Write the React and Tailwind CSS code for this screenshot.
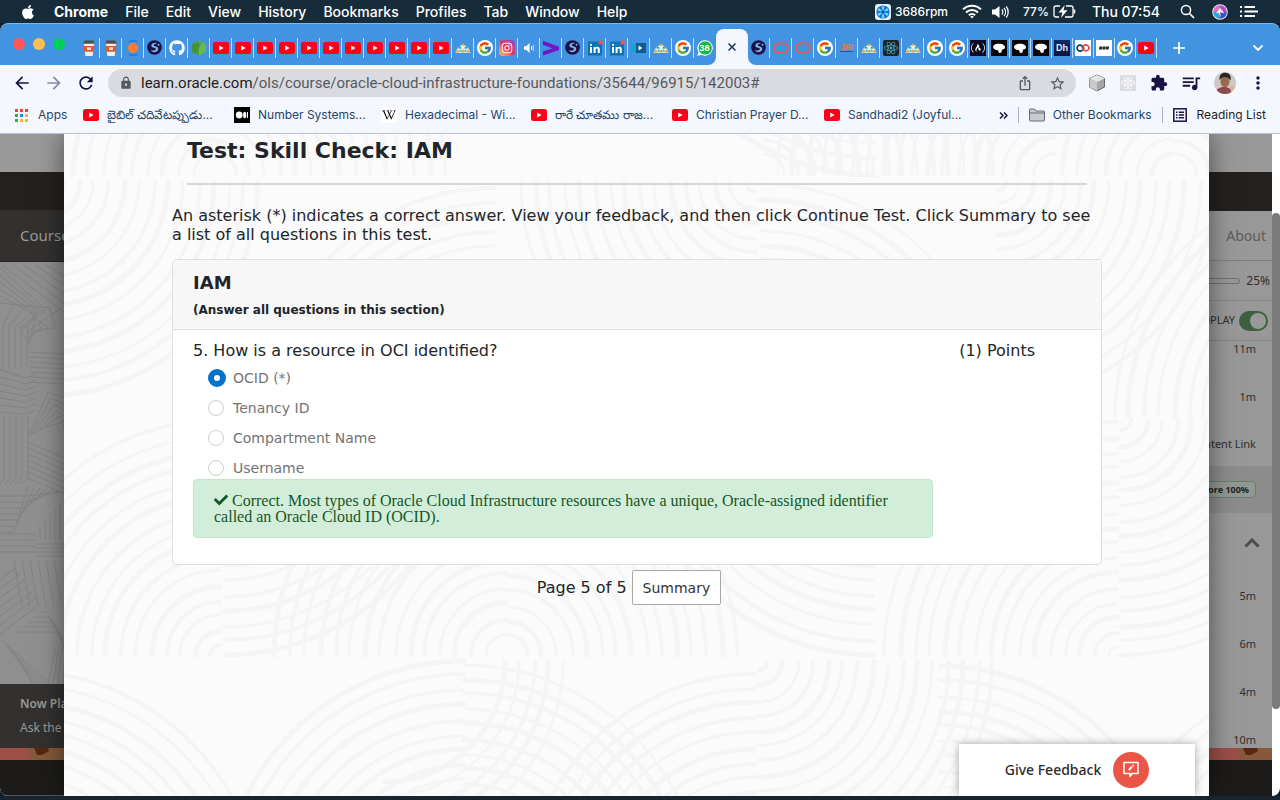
import React from 'react';
import { FaApple, FaGithub, FaInstagram, FaReact, FaWikipediaW, FaCheck, FaFreeCodeCamp } from 'react-icons/fa';
import { FcGoogle } from 'react-icons/fc';
import { MdExtension, MdIosShare, MdLock, MdMoreVert, MdQueueMusic, MdRefresh, MdStarBorder, MdArrowBack, MdArrowForward } from 'react-icons/md';

/* ---------- small drawings ---------- */
const YouTube = () => (
  <svg viewBox="0 0 16 12" className="h-3 w-4 shrink-0" aria-hidden="true">
    <rect width="16" height="12" rx="2.5" fill="#ff0019" />
    <path d="M6.2 3.6v4.8L10.6 6z" fill="#fff" />
  </svg>
);
const Cup = () => (
  <svg viewBox="1 1 14 14" className="size-4" aria-hidden="true">
    <path d="M3.6 4h8.8l-1.200 11H4.800z" fill="#f3eee8" />
    <path d="M3.200 6.200h9.600l-.7 5H3.900z" fill="#e2582b" />
    <path d="M6.300 7.400h3.400v2.400H6.300z" fill="#f6d9c8" />
    <path d="M4 1.200h8l1 2.800H3z" fill="#4a4f57" stroke="#777" strokeWidth=".6" />
  </svg>
);
const OrangeDot = () => (
  <svg viewBox="0 0 16 16" className="size-4" aria-hidden="true">
    <circle cx="8" cy="8" r="5" fill="#ff7a2b" />
    <path d="M3.800 2.200A7.200 7.200 0 0 1 12.200 2.200M3.800 13.800A7.200 7.200 0 0 0 12.200 13.800" fill="none" stroke="#1479f0" strokeWidth="1.400" />
  </svg>
);
const Globe = () => (
  <svg viewBox="0 0 16 16" className="size-[15px]" aria-hidden="true">
    <circle cx="8" cy="8" r="7.800" fill="#1b1247" />
    <path d="M10.800 3.200C7.500 2.600 4.500 4 4.600 6.200c.1 1.800 2.500 1.900 4 2.400 1.300.4 1.200 1.700-.2 2.300-1.300.5-3 .4-4.600-.6 1.200 2.300 3.400 3 5.400 2.500 2.600-.7 3.600-3.400 2-5C9.900 6.500 7.300 6.900 7.200 5.600 7.100 4.500 9 4.200 10.800 3.200z" fill="#7cb9ee" />
    <circle cx="12.300" cy="5" r="1" fill="#7cb9ee" />
  </svg>
);
const NodeHex = () => (
  <svg viewBox="0 0 16 16" className="size-4" aria-hidden="true">
    <path d="M8 .2l7 3.900v7.800L8 15.800 1 11.900V4.100z" fill="#4f9e45" />
    <path d="M8 .2l7 3.900v7.800L8 15.800z" fill="#6cb755" />
    <path d="M1 4.100L11 2 5 14.200l-4-2.300z" fill="#3f8a3c" opacity=".6" />
  </svg>
);
const Poly = () => (
  <svg viewBox="0 0 16 16" className="size-4" aria-hidden="true">
    <path d="M8 4l3 2 3 3 1.500 4H.5L2 9l3-3z" fill="#dff3f2" />
    <path d="M8 3.500l-2.400 2.300h4.800z" fill="#f5a33b" />
    <path d="M5 6L3 8.600h4zM11 6L9 8.600h4z" fill="#24a59a" />
    <path d="M2.600 9.200L.6 12.600h4zM8 8.800L6 12.600h4zM13.400 9.200l-2 3.400h4z" fill="#ef9f3c" />
    <path d="M5.400 9.200L4 11.600h2.800zM10.600 9.200L9.200 11.600H12z" fill="#2aa79d" />
  </svg>
);
const Google = () => (
  <span className="flex size-4 items-center justify-center rounded-full bg-white"><FcGoogle size={14} /></span>
);
const Insta = () => (
  <span className="flex size-4 items-center justify-center rounded bg-linear-to-bl from-[#8a3ac8] via-[#e8305f] to-[#fdc04a] text-white"><FaInstagram size={12} /></span>
);
const Speaker = () => (
  <svg viewBox="0 0 16 16" className="size-4" aria-hidden="true">
    <path d="M3 6.300h2.200L8.500 3v10L5.200 9.700H3z" fill="#fff" />
    <path d="M10.500 6v4M12.300 5v6" stroke="#dcebfa" strokeWidth="1" />
  </svg>
);
const PurpleArrow = () => (
  <svg viewBox="0 0 16 16" className="size-4" aria-hidden="true">
    <path d="M0 .8L16 6.800v3.200L0 15.600v-4L9.500 8.300 0 5z" fill="#7316c9" />
  </svg>
);
const LinkedIn = () => (
  <svg viewBox="0 0 16 16" className="size-4" aria-hidden="true">
    <rect x="1" y="1.500" width="14" height="14" fill="#0f74b3" />
    <path d="M3 7h2v6H3zM6.600 7h1.900v.9c.5-.8 1.200-1.100 2-1.100 1.600 0 2.300 1 2.300 2.700V13h-2V9.900c0-.8-.3-1.300-1-1.300s-1.200.5-1.200 1.300V13h-2z" fill="#fff" />
    <circle cx="4" cy="4.900" r="1.100" fill="#fff" />
    <circle cx="13.600" cy="2.400" r="2.200" fill="#ff4c4c" />
  </svg>
);
const Video = () => (
  <svg viewBox="0 0 16 16" className="size-4" aria-hidden="true">
    <rect x="0" y="3.500" width="12" height="9" fill="#12a5cf" />
    <rect x="5" y="3" width="10" height="10" fill="#0d5c8e" />
    <path d="M7.500 5.500v5l4-2.500z" fill="#fff" />
  </svg>
);
const Chat = () => (
  <span className="relative flex size-4 items-center justify-center text-white">
    <svg viewBox="0 0 16 16" className="absolute size-4" aria-hidden="true">
      <path d="M8.200.2a7.700 7.700 0 1 1-3.700 14.500L.3 15.900l1.200-4A7.700 7.700 0 0 1 8.200.2z" fill="#fff" />
      <circle cx="8.200" cy="7.900" r="6.700" fill="#12b84c" />
    </svg>
    <span className="relative text-[8px] leading-none font-bold">38</span>
  </span>
);
const OracleO = () => (
  <svg viewBox="0 0 16 16" className="size-4" aria-hidden="true">
    <rect x="1" y="3.400" width="14" height="9.200" rx="4.600" fill="none" stroke="#e8574a" strokeWidth="1.800" />
  </svg>
);
const ThreeR = () => (
  <span className="border-b border-[#27509c] text-[8px] leading-none font-bold text-[#e67a3c] italic">3RI</span>
);
const ReactTile = () => (
  <span className="flex size-4 items-center justify-center rounded-xs bg-[#20232a] text-[#4cb6c9]"><FaReact size={14} /></span>
);
const Camp = () => (
  <span className="flex size-4 items-center justify-center bg-[#0a0a23] text-white"><FaFreeCodeCamp size={14} /></span>
);
const Blob = () => (
  <svg viewBox="0 0 16 16" className="size-4" aria-hidden="true">
    <rect width="16" height="16" fill="#050505" />
    <path d="M2 7c0-2 2-3 5-3.200C11 3.500 14 5 14 7.200c0 1.500-1.500 2-3 2.500L10.500 12.500 8 13 7 10.200C4.500 10 2 9 2 7z" fill="#fff" />
  </svg>
);
const Hot = () => (
  <span className="flex size-4 items-center justify-center bg-linear-to-b from-[#0c2a68] to-[#0d1440] text-[9px] leading-none font-bold text-[#dbe6f7]">Dh</span>
);
const Loop = () => (
  <svg viewBox="0 0 16 16" className="size-4" aria-hidden="true">
    <rect width="16" height="16" fill="#fff" />
    <path d="M7.600 9.700A3 3 0 1 1 7.400 6.200L9 9" fill="none" stroke="#163a5f" strokeWidth="1.700" />
    <path d="M8.400 6.300a3 3 0 1 1 .2 3.500L7 7" fill="none" stroke="#e4443f" strokeWidth="1.700" />
  </svg>
);
const Dashes = () => (
  <svg viewBox="0 0 16 16" className="size-4" aria-hidden="true">
    <rect width="16" height="16" fill="#fff" />
    <path d="M3.500 6.500h3l-.5 3H3zM7 6.500h2.700l-.5 3H6.500zM10.200 6.500H13l-.5 3H9.700z" fill="#222" />
  </svg>
);
const Medium = () => (
  <svg viewBox="0 0 16 16" className="size-4 shrink-0" aria-hidden="true">
    <rect width="16" height="16" fill="#000" />
    <circle cx="5.200" cy="8" r="3.400" fill="#fff" />
    <ellipse cx="10.700" cy="8" rx="1.600" ry="3.300" fill="#fff" />
    <rect x="13" y="5" width="1" height="6" fill="#fff" />
  </svg>
);
const Wiki = () => (
  <span className="flex size-4 shrink-0 items-center justify-center rounded-xs bg-white text-black"><FaWikipediaW size={14} /></span>
);
const gridColors = ['#ea4335', '#ea4335', '#ea4335', '#34a853', '#1f87e8', '#fbb13c', '#34a853', '#fbb13c', '#fbb13c'];
const AppsGrid = () => (
  <svg viewBox="0 0 13 13" className="size-[13px] shrink-0" aria-hidden="true">
    {gridColors.map((c, i) => (
      <rect key={i} x={(i % 3) * 5} y={Math.floor(i / 3) * 5} width="3" height="3" fill={c} />
    ))}
  </svg>
);

/* ---------- macOS menu bar ---------- */
const menus = ['File', 'Edit', 'View', 'History', 'Bookmarks', 'Profiles', 'Tab', 'Window', 'Help'];

function MenuBar() {
  return (
    <header className="flex h-[23px] items-center bg-[#172c3b] pr-[22px] pl-5 text-sm font-medium text-white">
      <FaApple size={16} className="mr-4.5 shrink-0" aria-hidden="true" />
      <nav className="flex gap-[17px] leading-[22px]">
        <span className="font-bold">Chrome</span>
        {menus.map((m) => <span key={m}>{m}</span>)}
      </nav>
      <div className="ml-auto flex items-center whitespace-nowrap">
        <svg viewBox="0 0 16 16" className="mr-1 size-4" aria-hidden="true">
          <rect width="16" height="16" rx="3" fill="#e4eef8" />
          <circle cx="8" cy="8" r="6.600" fill="#1671d6" />
          <g fill="#6ee0ff">
            {[0, 60, 120, 180, 240, 300].map((a) => <path key={a} d="M8 8L6.500 2.500a5 5 0 0 1 3 0z" transform={`rotate(${a} 8 8)`} />)}
          </g>
          <circle cx="8" cy="8" r="1.500" fill="#0b4ba0" />
        </svg>
        <span className="mr-3.5 text-xs">3686rpm</span>
        <svg viewBox="0 0 20 15" className="mr-2.5 h-[15px] w-5" aria-hidden="true">
          <g fill="none" stroke="#fff" strokeWidth="2">
            <path d="M1 5.400a12.700 12.700 0 0 1 18 0" />
            <path d="M4 8.500a8.500 8.500 0 0 1 12 0" />
            <path d="M6.900 11.300a4.400 4.400 0 0 1 6.200 0" />
          </g>
          <path d="M8.200 12.600a2.500 2.500 0 0 1 3.600 0L10 14.500z" fill="#fff" />
        </svg>
        <svg viewBox="0 0 17 14" className="mr-3.5 h-3.5 w-[17px]" aria-hidden="true">
          <path d="M0 4.500h3L7.500 1v12L3 9.500H0z" fill="#fff" />
          <path d="M9.800 4.500a3.500 3.500 0 0 1 0 5M12 3a6 6 0 0 1 0 8M14.200 1.500a8.500 8.500 0 0 1 0 11" fill="none" stroke="#fff" strokeWidth="1.200" />
        </svg>
        <span className="mr-1 text-xs">77%</span>
        <svg viewBox="0 0 23 13" className="mr-4 h-[13px] w-[23px]" aria-hidden="true">
          <path d="M7 1H3a2 2 0 0 0-2 2v7a2 2 0 0 0 2 2h3M13 1h5a2 2 0 0 1 2 2v7a2 2 0 0 1-2 2h-6" fill="none" stroke="#fff" strokeWidth="1.300" />
          <path d="M11.800 0L5.500 7.400h4L7.800 13l6.700-7.800h-4z" fill="#fff" />
          <path d="M21.500 4.500v4" stroke="#fff" strokeWidth="1.400" />
        </svg>
        <span className="mr-5">Thu 07:54</span>
        <svg viewBox="0 0 15 15" className="mr-[17px] size-[15px]" aria-hidden="true">
          <circle cx="6" cy="6" r="4.600" fill="none" stroke="#fff" strokeWidth="1.500" />
          <path d="M9.500 9.500l4.500 4.500" stroke="#fff" strokeWidth="1.700" />
        </svg>
        <svg viewBox="0 0 16 16" className="mr-3 size-4" aria-hidden="true">
          <circle cx="8" cy="8" r="7.800" fill="#e9e4f2" />
          <path d="M8 1.200A6.800 6.800 0 0 0 1.200 8L8 8z" fill="#e96ab0" />
          <path d="M8 1.200A6.800 6.800 0 0 1 14.800 8H8z" fill="#b64cc4" />
          <path d="M1.200 8A6.800 6.800 0 0 0 8 14.800V8z" fill="#2ba6d8" />
          <path d="M14.800 8A6.800 6.800 0 0 1 8 14.800V8z" fill="#3a4fb4" />
          <path d="M4 9.500L8 4l4.500 5.500L8 8.200l1 5-2.500-4.500z" fill="#fff" opacity=".9" />
        </svg>
        <svg viewBox="0 0 18 13" className="h-[13px] w-[18px]" aria-hidden="true">
          <path d="M0 2h2M0 6.500h2M0 11h2M4.500 2H15M4.500 6.500H18M4.500 11H15" stroke="#fff" strokeWidth="1.800" />
        </svg>
      </div>
    </header>
  );
}

/* ---------- Chrome window ---------- */
const yt = Array.from({ length: 11 }, () => YouTube);
const leftTabs = [Cup, Cup, OrangeDot, Globe, FaGithub, NodeHex, ...yt, Poly, Google, Insta, Speaker, PurpleArrow, Globe, LinkedIn, LinkedIn, Video, Poly, Google, Chat];
const midTabs = [Globe, OracleO, OracleO, Google, ThreeR, Poly, ReactTile, Poly, Google, Google];
const rightTabs = [Camp, Blob, Blob, Blob, Hot, Loop, Dashes, Google, YouTube];

function Tab({ icon: Icon, narrow, last }) {
  return (
    <div className={`flex h-5 shrink-0 items-center justify-center border-r text-white ${narrow ? 'w-[21px]' : 'w-[22px]'} ${last ? 'border-transparent' : 'border-[#c4dcf3]'}`}>
      {Icon === FaGithub ? <FaGithub size={16} /> : <Icon />}
    </div>
  );
}

function TabStrip() {
  return (
    <div className="flex h-[42px] items-center rounded-t-lg border-t border-[#7fb6e8] bg-[#4294e0] pt-1.5">
      <div className="mr-[13px] ml-[13px] flex w-[52px] shrink-0 gap-2 pb-2">
        <span className="size-3 rounded-full bg-[#ff5757]" />
        <span className="size-3 rounded-full bg-[#ffbe4f]" />
        <span className="size-3 rounded-full bg-[#00cf5e]" />
      </div>
      {leftTabs.map((icon, i) => <Tab key={i} icon={icon} last={i === leftTabs.length - 1} />)}
      <div className="relative flex h-9 w-8 shrink-0 items-center justify-center self-end rounded-t-lg bg-[#f5f7fe] text-[#20355a]">
        <svg viewBox="0 0 48 8" className="absolute -inset-x-2 bottom-0 h-2 w-12" aria-hidden="true">
          <path d="M8 0v8H0a8 8 0 0 0 8-8zM40 0v8h8a8 8 0 0 1-8-8z" fill="#f5f7fe" />
        </svg>
        <button aria-label="Close tab">
          <svg viewBox="0 0 8 8" className="size-2" aria-hidden="true"><path d="M.5.500l7 7M7.500.500l-7 7" stroke="currentColor" strokeWidth="1.500" /></svg>
        </button>
      </div>
      {midTabs.map((icon, i) => <Tab key={i} icon={icon} />)}
      {rightTabs.map((icon, i) => <Tab key={i} icon={icon} narrow />)}
      <button aria-label="New tab" className="ml-4 text-white">
        <svg viewBox="0 0 12 12" className="size-3" aria-hidden="true"><path d="M6 0v12M0 6h12" stroke="currentColor" strokeWidth="1.700" /></svg>
      </button>
      <button aria-label="Search tabs" className="mr-4 ml-auto text-white">
        <svg viewBox="0 0 12 8" className="h-2 w-3" aria-hidden="true"><path d="M1.500 1.500L6 6l4.500-4.500" fill="none" stroke="currentColor" strokeWidth="1.800" /></svg>
      </button>
    </div>
  );
}

function Toolbar() {
  return (
    <div className="flex h-9 items-center bg-[#f5f7fe] pr-4 pl-3 text-[#1b1145]">
      <button aria-label="Back"><MdArrowBack size={20} /></button>
      <button aria-label="Forward" className="ml-3 text-[#8b88a6]"><MdArrowForward size={20} /></button>
      <button aria-label="Reload" className="mr-3 ml-3"><MdRefresh size={20} /></button>
      <div className="flex h-7 flex-1 items-center rounded-full bg-[#dadbe0] pr-2.5 pl-[11px] text-[#55585e]">
        <MdLock size={14} className="mr-2 shrink-0" aria-hidden="true" />
        <a href="#" className="flex-1 font-[Roboto,sans-serif] text-[15px]"><span className="text-[#1e2024]">learn.oracle.com</span>/ols/course/oracle-cloud-infrastructure-foundations/35644/96915/142003#</a>
        <button aria-label="Share" className="mr-4"><MdIosShare size={16} /></button>
        <button aria-label="Bookmark this page"><MdStarBorder size={17} /></button>
      </div>
      <svg viewBox="0 0 18 18" className="mr-3.5 ml-3 size-[18px]" aria-hidden="true">
        <path d="M9 1l7.500 3.500v8.500L9 17l-7.500-4V4.500z" fill="#a6a6a6" stroke="#666" />
        <path d="M9 1l7.500 3.500L9 8 1.500 4.500z" fill="#e6e6e6" />
        <path d="M1.500 4.500L9 8v9l-7.500-4z" fill="#c9c9c9" />
      </svg>
      <span className="mr-3.5 flex size-4 items-center justify-center bg-[#dcdde1] text-white"><FaReact size={14} /></span>
      <button aria-label="Extensions" className="mr-3"><MdExtension size={18} /></button>
      <button aria-label="Media" className="mr-3"><MdQueueMusic size={22} /></button>
      <svg viewBox="0 0 22 22" className="mr-3 size-[22px]" aria-hidden="true">
        <defs><clipPath id="avatar"><circle cx="11" cy="11" r="11" /></clipPath></defs>
        <g clipPath="url(#avatar)">
          <rect width="22" height="22" fill="#cfc8c4" />
          <path d="M1 22c1-5 4-7 9-7s8 2 9 7z" fill="#8c4a4f" />
          <path d="M16 13l6 2v7h-5z" fill="#d9b49b" />
          <ellipse cx="11" cy="9.500" rx="4.500" ry="5.800" fill="#9a6a50" />
          <path d="M5.500 8C5 3 8 .5 11.500.8 15.500 1 17.500 4 16.500 8.500 15 6 13 5 11 5 8.500 5 7 6 5.500 8z" fill="#2a2122" />
        </g>
      </svg>
      <button aria-label="More" className="-mr-1"><MdMoreVert size={20} /></button>
    </div>
  );
}

function Bookmark({ icon: Icon, label, width }) {
  return (
    <a href="#" className={`flex shrink-0 items-center gap-2 whitespace-nowrap ${width}`}><Icon />{label}</a>
  );
}

function BookmarksBar() {
  return (
    <nav className="flex h-[33px] items-center border-b border-[#bdbfd6] bg-[#f5f7fe] pr-3.5 pb-1 pl-[15px] text-xs text-[#24466c]">
      <a href="#" className="flex w-[68px] shrink-0 items-center gap-2.5"><AppsGrid />Apps</a>
      <Bookmark icon={YouTube} label="బైబిల్ చదివేటప్పుడు..." width="w-[151px]" />
      <Bookmark icon={Medium} label="Number Systems..." width="w-[147px]" />
      <Bookmark icon={Wiki} label="Hexadecimal - Wi..." width="w-[150px]" />
      <Bookmark icon={YouTube} label="రారే చూతము రాజ..." width="w-[141px]" />
      <Bookmark icon={YouTube} label="Christian Prayer D..." width="w-[152px]" />
      <Bookmark icon={YouTube} label="Sandhadi2 (Joyful..." width="w-[136px]" />
      <button aria-label="More bookmarks" className="ml-auto text-[#1b1145]">
        <svg viewBox="0 0 9 7" className="h-[7px] w-[9px]" aria-hidden="true"><path d="M1 .5l3 3-3 3M5 .5l3 3-3 3" fill="none" stroke="currentColor" strokeWidth="1.500" /></svg>
      </button>
      <span className="mx-2.5 h-4 w-px bg-[#a9afc6]" />
      <a href="#" className="flex items-center gap-2">
        <svg viewBox="0 0 16 14" className="h-3.5 w-4" aria-hidden="true"><path d="M.5 12V2a1 1 0 0 1 1-1h4l1.500 2h7.500a1 1 0 0 1 1 1v8a1 1 0 0 1-1 1h-13a1 1 0 0 1-1-1zM.5 5h15" fill="#c9cbd1" stroke="#666a70" /></svg>
        Other Bookmarks
      </a>
      <span className="mx-2.5 h-4 w-px bg-[#a9afc6]" />
      <button className="flex items-center gap-2.5 text-[#1b1f2b]">
        <svg viewBox="0 0 14 14" className="size-3.5 text-[#1b1145]" aria-hidden="true">
          <rect x=".8" y=".8" width="12.400" height="12.400" fill="none" stroke="currentColor" strokeWidth="1.500" />
          <path d="M3 4.200h1.500M3 7h1.500M3 9.800h1.500M5.800 4.200H11M5.800 7H11M5.800 9.800H11" stroke="currentColor" strokeWidth="1.400" />
        </svg>
        Reading List
      </button>
    </nav>
  );
}

/* ---------- decorative line patterns ---------- */
// Each fan is a set of concentric quarter arcs: [cx, cy, xDir, yDir, firstRadius, lastRadius]
const fans = [
  [150, 40, -1, -1, 20, 240], [152, 40, 1, -1, 20, 240],
  [810, -195, -1, 1, 100, 238], [700, 40, 1, -1, 20, 240], [990, 40, -1, -1, 20, 290],
  [1108, 40, -1, -1, 20, 110], [1112, 40, 1, -1, 20, 240],
  [-20, 48, 1, 1, 20, 228],
  [430, 282, -1, -1, 20, 240],
  [692, 48, -1, 1, 10, 240], [697, 282, 1, -1, 20, 240],
  [934, 48, 1, 1, 8, 225], [1290, 282, -1, -1, 60, 250],
  [156, 521, -1, -1, 10, 240], [161, 286, 1, 1, 10, 238],
  [442, 521, -1, -1, 20, 235], [444, 521, 1, -1, 20, 240],
  [809, 286, -1, 1, 10, 236], [1053, 521, -1, -1, 8, 235], [1057, 286, 1, 1, 10, 238],
  [-44, 778, 1, -1, 120, 252], [400, 770, -1, -1, 80, 245], [400, 770, 1, -1, 120, 245],
  [321, 528, 1, 1, 120, 180],
  [691, 770, -1, -1, 80, 240], [695, 528, 1, 1, 8, 234],
  [876, 766, 1, -1, 100, 236], [1290, 790, -1, -1, 150, 260],
];
const arcPaths = fans.flatMap(([cx, cy, dx, dy, r0, r1], n) => {
  const out = [];
  let r = r0;
  let k = 0;
  while (r <= r1) {
    out.push({ d: `M${cx + dx * r} ${cy}A${r} ${r} 0 0 ${dx * dy > 0 ? 1 : 0} ${cx} ${cy + dy * r}`, w: 3 + ((n + k) % 3) });
    k += 1;
    r += 13 + ((n * 3 + k * 2) % 5);
  }
  return out;
});

function ArcPattern() {
  return (
    <svg className="pointer-events-none absolute top-0 left-0 h-[662px] w-[1145px]" viewBox="0 0 1145 662" aria-hidden="true">
      <g fill="none" stroke="#f5f5f5" strokeLinecap="round">
        {arcPaths.map((a, i) => <path key={i} d={a.d} strokeWidth={a.w} />)}
      </g>
    </svg>
  );
}

const range = (n) => Array.from({ length: n }, (_, i) => i);
function HatchPattern() {
  return (
    <svg className="h-[422px] w-16" viewBox="0 0 64 422" aria-hidden="true">
      <g fill="none" stroke="#828282" strokeWidth="1">
        {range(5).map((i) => <path key={`a${i}`} d={`M${2 + i * 11} 3L64 ${50 - i * 9}`} />)}
        {range(6).map((i) => <path key={`b${i}`} d={`M0 ${6 + i * 7}L${14 + i * 8 > 50 ? 50 : 44 - i * 5} 46L${20 + i * 7} 66L30 ${84 - i * 3}`} />)}
        {range(5).map((i) => <path key={`c${i}`} d={`M${3 + i * 6} ${108 - i}V${62 + i * 2}L${14 + i * 11} ${44 + i}`} />)}
        {range(7).map((i) => <path key={`d${i}`} d={`M30 ${90 + i * 5}L64 ${92 + i * 5}`} />)}
        {range(7).map((i) => <path key={`e${i}`} d={`M0 ${108 + i * 7}L26 ${116 + i * 6}L36 ${112 + i * 6}`} />)}
        {range(6).map((i) => <path key={`f${i}`} d={`M${28 + i * 3} ${176 - i * 2}L${48 + i * 3} ${130 + i * 6}L64 ${136 + i * 6}`} />)}
        {range(5).map((i) => <path key={`g${i}`} d={`M${4 + i * 6} 154V216L${i * 5} 222`} />)}
        {range(7).map((i) => <path key={`h${i}`} d={`M28 ${180 + i * 6}L64 ${196 + i * 6}`} />)}
        {range(7).map((i) => <path key={`i${i}`} d={`M0 ${270 - i * 6}H${14 + i * 2}L${28 + i * 6} ${224 + i}`} />)}
        {range(5).map((i) => <path key={`j${i}`} d={`M${40 + i * 5} 278V${264 - i * 6}`} />)}
        {range(4).map((i) => <path key={`k${i}`} d={`M0 ${272 + i * 6}H36M34 ${282 + i * 4}H64`} />)}
        {range(6).map((i) => <path key={`l${i}`} d={`M${14 + i * 8} 298L${22 + i * 8} 344`} />)}
        {range(7).map((i) => <path key={`m${i}`} d={`M0 ${318 + i * 9}L${16 + i * 4} ${306 + i * 6}`} />)}
        {range(5).map((i) => <path key={`n${i}`} d={`M${40 - i * 6} ${350 + i * 5}H${46 + i * 3}L64 ${376 + i * 3}`} />)}
        {range(6).map((i) => <path key={`o${i}`} d={`M${2 + i * 4} ${378 + i * 5}L${46 - i} ${418 + i * 4}`} />)}
        {range(4).map((i) => <path key={`p${i}`} d={`M${48 + i * 5} 422L${56 + i * 3} 384`} />)}
      </g>
    </svg>
  );
}

function BannerStrip() {
  return (
    <svg className="h-3 w-16 shrink-0" viewBox="0 0 64 12" preserveAspectRatio="none" aria-hidden="true">
      <rect width="64" height="12" fill="#85593a" />
      <path d="M0 0h28l4 12H0z" fill="#9b4f47" />
      <path d="M34 0h14l1 3-7 4h-5z" fill="#5a2512" />
    </svg>
  );
}

/* ---------- dimmed course page ---------- */
function CourseLeft() {
  return (
    <div className="flex flex-col overflow-hidden whitespace-nowrap text-[#9b9997]">
      <div className="h-[38px] bg-[#999]" />
      <div className="h-[38px] bg-[#24201d]" />
      <div className="flex h-[52px] items-center border-b border-[#2a2321] bg-[#323130] pl-5 text-[15px]">Course</div>
      <div className="min-h-0 flex-1 overflow-hidden bg-[#8f8f8f]"><HatchPattern /></div>
      <div className="h-16 bg-[#323130] pt-2 pl-5 text-xs leading-6">
        <p className="font-semibold">Now Playing</p>
        <p>Ask the Instructor</p>
      </div>
      <BannerStrip />
      <div className="h-9 rounded-bl-md border-b border-[#555] bg-[#1c1b19]" />
    </div>
  );
}

function CourseRight() {
  return (
    <div className="flex flex-col overflow-hidden bg-[#989898] text-[11px] whitespace-nowrap text-[#2f2f2f]">
      <div className="h-[38px]" />
      <div className="h-[39px] bg-[#24201d]" />
      <div className="flex h-[50px] items-center justify-end border-b border-[#7f7f7f] pr-1.5 text-sm text-[#5c5c5c]">About</div>
      <div className="flex h-10 items-center justify-end gap-1.5 border-b border-[#858585] pr-0.5 text-xs">
        <span className="h-1.5 w-20 shrink-0 rounded-full border border-[#6f6f6f]" />25%
      </div>
      <div className="flex h-10 items-center justify-end gap-1 border-b border-[#858585] pr-1">
        AUTOPLAY
        <button role="switch" aria-checked="true" aria-label="Autoplay" className="flex h-5 w-[29px] shrink-0 items-center justify-end rounded-full bg-[#3f5f3e] pr-0.5">
          <span className="size-4 rounded-full bg-[#999]" />
        </button>
      </div>
      <div className="flex h-[125px] flex-col items-end justify-between pr-4 pb-3.5 leading-4">
        <span>11m</span><span>1m</span><span>Content Link</span>
      </div>
      <div className="flex h-[47px] items-center justify-end bg-[#8c8c8c] pr-4">
        <span className="rounded border border-[#6f7a6f] bg-[#919891] px-1.5 text-[9px] leading-[15px] font-bold text-[#222]">Score 100%</span>
      </div>
      <div className="flex h-[59px] items-center justify-end pr-3">
        <svg viewBox="0 0 16 10" className="h-2.5 w-4" aria-hidden="true"><path d="M1.500 8.500L8 2l6.500 6.500" fill="none" stroke="#4d4d4d" strokeWidth="3" /></svg>
      </div>
      <div className="flex flex-1 flex-col items-end justify-between pt-4 pr-4 leading-4">
        <span>5m</span><span>6m</span><span>4m</span><span>10m</span>
      </div>
      <BannerStrip />
      <div className="h-9 bg-[#1c1b19]" />
    </div>
  );
}

/* ---------- test dialog ---------- */
const options = ['OCID (*)', 'Tenancy ID', 'Compartment Name', 'Username'];

function TestDialog() {
  return (
    <main className="relative z-10 min-w-0 overflow-hidden bg-[#fbfbfb] pr-[107px] pl-[108px] font-['DejaVu_Sans',Verdana,sans-serif] text-base leading-[19px] text-[#212529]">
      <ArcPattern />
      <div className="relative">
        <h1 className="mr-[15px] ml-[15px] border-b-2 border-[#d5d5d5] pt-[3px] pb-[18px] text-[22px] leading-7 font-bold">Test: Skill Check: IAM</h1>
        <p className="mt-[21px]">An asterisk (*) indicates a correct answer. View your feedback, and then click Continue Test. Click Summary to see a list of all questions in this test.</p>
        <section className="mt-[15px] rounded border border-[#dfdfdf] bg-white">
          <div className="border-b border-[#dfdfdf] bg-[#f7f7f7] px-5 pt-3 pb-[11px]">
            <h2 className="text-lg leading-[22px] font-bold">IAM</h2>
            <p className="mt-2 text-xs leading-4 font-bold">(Answer all questions in this section)</p>
          </div>
          <fieldset className="px-5 pt-[11px] pb-[26px]">
            <div className="flex justify-between pr-[46px]">
              <legend>5. How is a resource in OCI identified?</legend>
              <span>(1) Points</span>
            </div>
            <div className="mt-[7px] flex flex-col gap-2 pl-[15px] text-sm text-[#737373]">
              {options.map((o, i) => (
                <label key={o} className="flex h-[22px] items-center">
                  <input type="radio" name="answer" defaultChecked={i === 0} className="mr-[9px] size-4 appearance-none rounded-full border border-[#d0d0d0] bg-white checked:mr-[7px] checked:size-[18px] checked:border-6 checked:border-[#0572ce]" />
                  {o}
                </label>
              ))}
            </div>
            <div className="mr-[148px] rounded border border-[#c3e6cb] bg-[#d3eddb] px-5 pt-[13px] pb-3 font-['Liberation_Serif',serif] leading-4 text-[#155724]">
              <FaCheck size={14} className="mr-1 inline align-[-1px]" aria-hidden="true" />
              Correct. Most types of Oracle Cloud Infrastructure resources have a unique, Oracle-assigned identifier called an Oracle Cloud ID (OCID).
            </div>
          </fieldset>
        </section>
        <div className="mt-[5px] flex items-center justify-center gap-[5px] pr-4">
          <span>Page 5 of 5</span>
          <button className="h-[35px] rounded-xs border border-[#a8a8a8] bg-white px-2.5 text-sm text-[#333]">Summary</button>
        </div>
      </div>
    </main>
  );
}

export default function App() {
  return (
    <div className="flex min-h-screen flex-col bg-[#101c28] font-[Inter,'Noto_Sans',sans-serif]">
      <MenuBar />
      <TabStrip />
      <Toolbar />
      <BookmarksBar />
      <div className="relative grid flex-1 grid-cols-[64px_minmax(0,1fr)_63px_8px] overflow-hidden rounded-b-lg bg-white font-['Noto_Sans',sans-serif]">
        <CourseLeft />
        <div className="relative grid shadow-[0_0_24px_rgba(0,0,0,0.5)]"><TestDialog /></div>
        <CourseRight />
        <div className="pt-[79px]"><div className="h-[496px] rounded-full bg-[#7b7b7b]" /></div>
        <button className="absolute right-[85px] bottom-0 z-20 flex h-[52px] w-[236px] items-center justify-center gap-3 bg-white text-sm font-medium text-[#2b2b2b] shadow-[0_0_8px_rgba(0,0,0,0.35)]">
          Give Feedback
          <span className="flex size-9 items-center justify-center rounded-full bg-[#ea5548]">
            <svg viewBox="0 0 16 18" className="h-[18px] w-4" fill="none" stroke="#fff" aria-hidden="true">
              <path d="M1 1.500h14v11H9l-2 3v-3H1z" strokeWidth="1.500" strokeLinejoin="round" />
              <path d="M5.800 9L9 5.800" strokeWidth="2" />
              <path d="M9.700 5l1-1" strokeWidth="2" />
            </svg>
          </span>
        </button>
      </div>
      <div className="h-1 bg-[#172431]" />
    </div>
  );
}
